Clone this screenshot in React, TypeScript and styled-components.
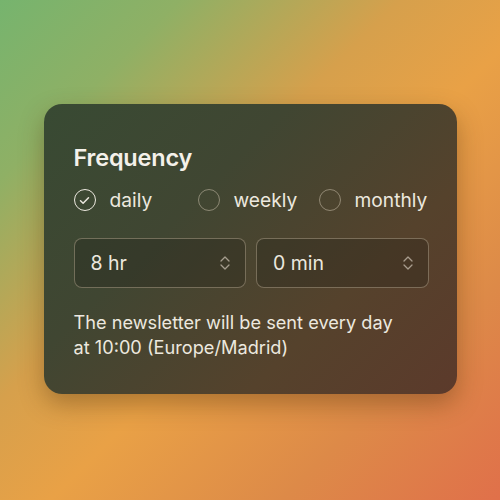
import React, { useState } from 'react';
import styled, { createGlobalStyle } from 'styled-components';

const GlobalStyle = createGlobalStyle`
  html, body {
    margin: 0;
    padding: 0;
  }
  body {
    font-family: Inter, "Noto Sans", sans-serif;
  }
`;

const Page = styled.div`
  width: 500px;
  height: 500px;
  display: flex;
  align-items: flex-start;
  justify-content: center;
  padding-top: 104px;
  box-sizing: border-box;
  background: linear-gradient(135deg, #76b46e 0%, #8fb065 18%, #d6a04c 40%, #e9a146 55%, #dd8a48 78%, #e0704a 100%);
`;

const Card = styled.div`
  width: 413px;
  height: 290px;
  box-sizing: border-box;
  padding: 39px 28px 0 30px;
  border-radius: 18px;
  background: linear-gradient(135deg, #384a33 0%, #404632 35%, #55422c 70%, #5c3a2b 100%);
  box-shadow: 0 10px 24px rgba(70, 40, 10, 0.35);
  color: #f2efe8;
  display: flex;
  flex-direction: column;
`;

const Title = styled.h2`
  margin: 0 0 9px;
  font-size: 23.5px;
  line-height: 30px;
  font-weight: 600;
  letter-spacing: -0.2px;
  color: #f4f1ea;
`;

const RadioRow = styled.div`
  display: grid;
  grid-template-columns: 124px 121px auto;
  align-items: center;
  height: 36px;
`;

const Option = styled.label`
  display: flex;
  align-items: center;
  gap: 14px;
  font-size: 19.2px;
  color: #ece8df;
  cursor: pointer;
`;

const Circle = styled.span<{ $checked: boolean }>`
  width: 22px;
  height: 22px;
  border-radius: 50%;
  box-sizing: border-box;
  border: 1.5px solid ${p => (p.$checked ? '#ece8df' : 'rgba(200, 190, 170, 0.55)')};
  display: flex;
  align-items: center;
  justify-content: center;
`;

const Selects = styled.div`
  display: grid;
  grid-template-columns: 1fr 1fr;
  gap: 10px;
  margin-top: 20px;
`;

const SelectBox = styled.div`
  height: 50px;
  box-sizing: border-box;
  border: 1px solid rgba(190, 175, 150, 0.45);
  border-radius: 8px;
  background: rgba(30, 28, 22, 0.28);
  display: flex;
  align-items: center;
  justify-content: space-between;
  padding: 0 14px 0 16px;
  font-size: 19.5px;
  color: #ece8df;
`;

const Note = styled.p`
  margin: 22px 0 0;
  font-size: 18.2px;
  line-height: 25px;
  color: #ece8df;
`;

const Chevrons = () => (
  <svg width="12" height="16" viewBox="0 0 12 16" fill="none" stroke="rgba(210,200,185,0.7)" strokeWidth="1.3" strokeLinecap="round" strokeLinejoin="round">
    <path d="M2 6l4-4 4 4" />
    <path d="M2 10l4 4 4-4" />
  </svg>
);

const options = ['daily', 'weekly', 'monthly'];

export default function App() {
  const [freq, setFreq] = useState('daily');
  return (
    <>
      <GlobalStyle />
      <Page>
        <Card>
          <Title>Frequency</Title>
          <RadioRow>
            {options.map(o => (
              <Option key={o} onClick={() => setFreq(o)}>
                <Circle $checked={freq === o}>
                  {freq === o && (
                    <svg width="11" height="9" viewBox="0 0 11 9" fill="none" stroke="#ece8df" strokeWidth="1.5" strokeLinecap="round" strokeLinejoin="round">
                      <path d="M1.5 4.8l2.6 2.4L9.5 1.8" />
                    </svg>
                  )}
                </Circle>
                {o}
              </Option>
            ))}
          </RadioRow>
          <Selects>
            <SelectBox>
              8 hr
              <Chevrons />
            </SelectBox>
            <SelectBox>
              0 min
              <Chevrons />
            </SelectBox>
          </Selects>
          <Note>
            The newsletter will be sent every day
            <br />
            at 10:00 (Europe/Madrid)
          </Note>
        </Card>
      </Page>
    </>
  );
}
